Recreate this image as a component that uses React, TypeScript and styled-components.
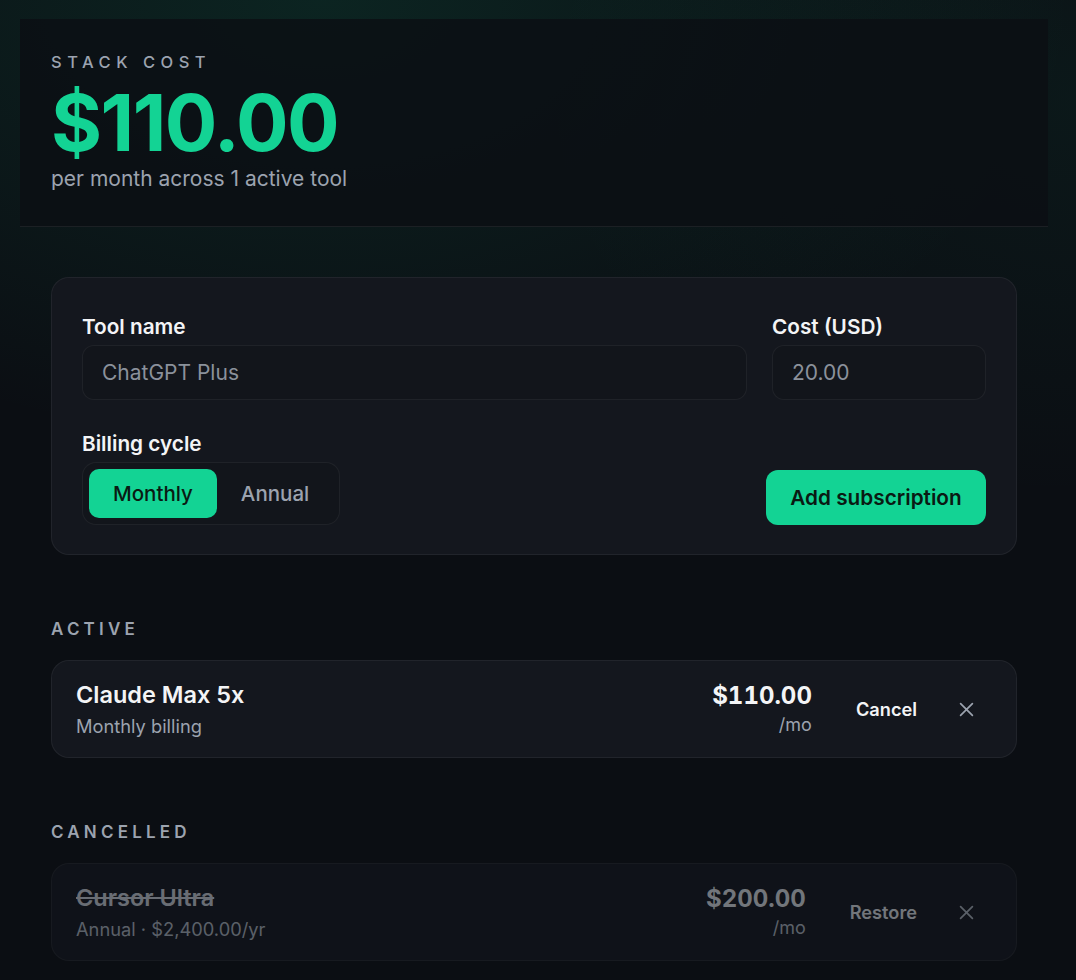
import React from "react";
import styled, { createGlobalStyle } from "styled-components";

const GlobalStyle = createGlobalStyle`
  * { box-sizing: border-box; }
  html, body {
    margin: 0;
    padding: 0;
    background: #0b0e13;
  }
  body {
    font-family: Inter, "Noto Sans", "Liberation Sans", sans-serif;
    color: #f3f4f6;
    -webkit-font-smoothing: antialiased;
  }
`;

const Page = styled.div`
  min-height: 980px;
  padding: 19px 28px 40px 20px;
  background:
    radial-gradient(ellipse 70% 45% at 30% 0%, rgba(16, 185, 129, 0.13), rgba(16, 185, 129, 0) 100%),
    radial-gradient(ellipse 50% 40% at 100% 10%, rgba(16, 185, 129, 0.06), rgba(16, 185, 129, 0) 100%),
    #0b0e13;
`;

const Shell = styled.div`
  width: 1028px;
`;

const Header = styled.header`
  background: rgba(11, 15, 20, 0.82);
  border-bottom: 1px solid rgba(255, 255, 255, 0.07);
  padding: 33px 31px 33px;
  display: flex;
  flex-direction: column;
`;

const Eyebrow = styled.div`
  font-size: 16.5px;
  font-weight: 500;
  letter-spacing: 5.5px;
  text-transform: uppercase;
  color: #9ca3af;
  line-height: 20px;
`;

const Total = styled.div`
  font-size: 78px;
  font-weight: 700;
  letter-spacing: -1.5px;
  line-height: 80px;
  color: #13d394;
  margin-top: 11px;
`;

const Subtitle = styled.div`
  font-size: 21px;
  line-height: 28px;
  color: #9ca3af;
  margin-top: 2px;
`;

const Main = styled.main`
  padding: 50px 31px 0;
  display: flex;
  flex-direction: column;
`;

const Card = styled.div`
  background: #14171e;
  border: 1px solid rgba(255, 255, 255, 0.06);
  border-radius: 18px;
`;

const FormCard = styled(Card)`
  padding: 36px 30px 29px;
  display: flex;
  flex-direction: column;
  gap: 31px;
`;

const FieldGrid = styled.div`
  display: grid;
  grid-template-columns: 1fr 214px;
  gap: 25px;
`;

const Field = styled.label`
  display: flex;
  flex-direction: column;
  gap: 5px;
`;

const Label = styled.span`
  font-size: 20.75px;
  font-weight: 600;
  line-height: 26px;
  color: #f3f4f6;
`;

const Input = styled.input`
  height: 55px;
  border-radius: 12px;
  border: 1px solid rgba(255, 255, 255, 0.06);
  background: #12151b;
  padding: 0 19px;
  font-family: inherit;
  font-size: 21px;
  color: #f3f4f6;
  outline: none;
  &::placeholder {
    color: #8b919b;
  }
`;

const BottomRow = styled.div`
  display: flex;
  justify-content: space-between;
  align-items: flex-end;
`;

const Segmented = styled.div`
  display: flex;
  padding: 6px;
  border-radius: 14px;
  border: 1px solid rgba(255, 255, 255, 0.06);
  background: #12151b;
`;

const SegButton = styled.button<{ $active?: boolean }>`
  height: 49px;
  padding: 0 24px;
  border: none;
  border-radius: 10px;
  font-family: inherit;
  font-size: 20.5px;
  font-weight: 500;
  cursor: pointer;
  background: ${(p) => (p.$active ? "#13d394" : "transparent")};
  color: ${(p) => (p.$active ? "#0a1a13" : "#9ca3af")};
`;

const PrimaryButton = styled.button`
  height: 55px;
  width: 220px;
  border: none;
  border-radius: 12px;
  background: #13d394;
  color: #0a1a13;
  font-family: inherit;
  font-size: 20.75px;
  font-weight: 600;
  cursor: pointer;
`;

const Section = styled.section`
  margin-top: 64px;
  display: flex;
  flex-direction: column;
  gap: 21px;
`;

const SectionTitle = styled.h2`
  margin: 0;
  font-size: 17px;
  font-weight: 600;
  letter-spacing: 4.2px;
  line-height: 20px;
  text-transform: uppercase;
  color: #9ca3af;
`;

const SubRow = styled(Card)<{ $muted?: boolean }>`
  height: 98px;
  padding: 0 30px 0 24px;
  display: flex;
  align-items: center;
  opacity: ${(p) => (p.$muted ? 0.55 : 1)};
`;

const SubInfo = styled.div`
  flex: 1;
  display: flex;
  flex-direction: column;
  gap: 4px;
`;

const SubName = styled.div<{ $struck?: boolean }>`
  font-size: 23.5px;
  font-weight: 600;
  line-height: 30px;
  color: ${(p) => (p.$struck ? "#b7bcc4" : "#f3f4f6")};
  text-decoration: ${(p) => (p.$struck ? "line-through" : "none")};
`;

const SubMeta = styled.div`
  font-size: 18.3px;
  line-height: 24px;
  color: #9ca3af;
`;

const PriceBlock = styled.div`
  display: flex;
  flex-direction: column;
  align-items: flex-end;
  gap: 4px;
`;

const Price = styled.div<{ $muted?: boolean }>`
  font-size: 24px;
  font-weight: 700;
  line-height: 28px;
  font-variant-numeric: tabular-nums;
  color: ${(p) => (p.$muted ? "#c7cbd1" : "#f3f4f6")};
`;

const Per = styled.div`
  font-size: 18px;
  line-height: 22px;
  color: #9ca3af;
`;

const TextButton = styled.button<{ $muted?: boolean }>`
  margin-left: 28px;
  padding: 10px 16px;
  border: none;
  background: transparent;
  font-family: inherit;
  font-size: 18.2px;
  font-weight: 600;
  color: ${(p) => (p.$muted ? "#c7cbd1" : "#f3f4f6")};
  cursor: pointer;
`;

const IconButton = styled.button`
  margin-left: 13px;
  width: 40px;
  height: 40px;
  border: none;
  background: transparent;
  color: #9ca3af;
  display: flex;
  align-items: center;
  justify-content: center;
  cursor: pointer;
  padding: 0;
`;

const CloseIcon = () => (
  <svg width="15" height="15" viewBox="0 0 14 14" fill="none">
    <path d="M1.5 1.5 L12.5 12.5 M12.5 1.5 L1.5 12.5" stroke="currentColor" strokeWidth="1.6" strokeLinecap="round" />
  </svg>
);

type Sub = {
  name: string;
  meta: string;
  price: string;
  action: string;
  cancelled?: boolean;
};

const active: Sub[] = [
  { name: "Claude Max 5x", meta: "Monthly billing", price: "$110.00", action: "Cancel" },
];

const cancelled: Sub[] = [
  {
    name: "Cursor Ultra",
    meta: "Annual · $2,400.00/yr",
    price: "$200.00",
    action: "Restore",
    cancelled: true,
  },
];

const SubscriptionRow = ({ sub }: { sub: Sub }) => (
  <SubRow $muted={sub.cancelled}>
    <SubInfo>
      <SubName $struck={sub.cancelled}>{sub.name}</SubName>
      <SubMeta>{sub.meta}</SubMeta>
    </SubInfo>
    <PriceBlock>
      <Price $muted={sub.cancelled}>{sub.price}</Price>
      <Per>/mo</Per>
    </PriceBlock>
    <TextButton $muted={sub.cancelled}>{sub.action}</TextButton>
    <IconButton aria-label="Remove">
      <CloseIcon />
    </IconButton>
  </SubRow>
);

export default function App() {
  return (
    <>
      <GlobalStyle />
      <Page>
        <Shell>
          <Header>
            <Eyebrow>Stack cost</Eyebrow>
            <Total>$110.00</Total>
            <Subtitle>per month across 1 active tool</Subtitle>
          </Header>
          <Main>
            <FormCard>
              <FieldGrid>
                <Field>
                  <Label>Tool name</Label>
                  <Input placeholder="ChatGPT Plus" />
                </Field>
                <Field>
                  <Label>Cost (USD)</Label>
                  <Input placeholder="20.00" />
                </Field>
              </FieldGrid>
              <BottomRow>
                <Field as="div">
                  <Label>Billing cycle</Label>
                  <Segmented>
                    <SegButton $active>Monthly</SegButton>
                    <SegButton>Annual</SegButton>
                  </Segmented>
                </Field>
                <PrimaryButton>Add subscription</PrimaryButton>
              </BottomRow>
            </FormCard>

            <Section>
              <SectionTitle>Active</SectionTitle>
              {active.map((s) => (
                <SubscriptionRow key={s.name} sub={s} />
              ))}
            </Section>

            <Section>
              <SectionTitle>Cancelled</SectionTitle>
              {cancelled.map((s) => (
                <SubscriptionRow key={s.name} sub={s} />
              ))}
            </Section>
          </Main>
        </Shell>
      </Page>
    </>
  );
}
